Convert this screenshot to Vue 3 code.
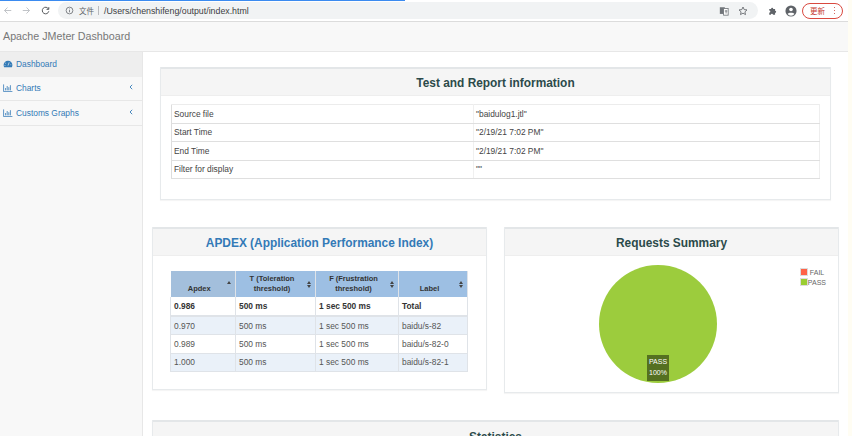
<script setup>
const info = [
  ['Source file', '"baidulog1.jtl"'],
  ['Start Time', '"2/19/21 7:02 PM"'],
  ['End Time', '"2/19/21 7:02 PM"'],
  ['Filter for display', '""'],
]
const apdex = [
  ['0.970', '500 ms', '1 sec 500 ms', 'baidu/s-82'],
  ['0.989', '500 ms', '1 sec 500 ms', 'baidu/s-82-0'],
  ['1.000', '500 ms', '1 sec 500 ms', 'baidu/s-82-1'],
]
</script>

<template>
  <div class="screen">
    <div class="window">
      <div class="progress"></div>
      <header class="toolbar">
        <svg class="nav dim" viewBox="0 0 12 12"><path d="M11 6H2M6 2L2 6l4 4" /></svg>
        <svg class="nav dim" viewBox="0 0 12 12"><path d="M1 6h9M6 2l4 4-4 4" /></svg>
        <svg class="nav" viewBox="0 0 12 12"><path d="M10 4A4.4 4.4 0 1 0 10.4 7M10.4 1.5V4.5H7.4" /></svg>
        <div class="omnibox">
          <svg class="info" viewBox="0 0 12 12"><circle cx="6" cy="6" r="4.5" /><path d="M6 5.4v3M6 3.4v1" /></svg>
          <span class="scheme">文件</span>
          <span class="sep"></span>
          <span class="url">/Users/chenshifeng/output/index.html</span>
          <span class="spacer"></span>
          <svg class="tr" viewBox="0 0 12 12"><rect x="1" y="1.5" width="6" height="8" fill="#70757a" /><rect x="5.5" y="3" width="5.5" height="8" fill="#fff" stroke="#70757a" /><path d="M7 6h3M8.5 5v4" stroke="#70757a" fill="none" /></svg>
          <svg class="star" viewBox="0 0 12 12"><path d="M6 1.2l1.4 3.1 3.4.4-2.5 2.3.7 3.3L6 8.6l-3 1.7.7-3.3L1.200 4.700l3.400-.4z" /></svg>
        </div>
        <svg class="ext" viewBox="0 0 12 12"><path d="M1.500 3.500h2.200a1.300 1.300 0 0 1 2.600 0h2.200v2.200a1.300 1.300 0 0 1 0 2.600v2.200H6a1.300 1.300 0 0 0-2.600 0H1.500V8a1.300 1.300 0 0 0 0-2.600z" /></svg>
        <svg class="avatar" viewBox="0 0 14 14"><circle cx="7" cy="7" r="6.500" fill="#5f6368" /><circle cx="7" cy="5.200" r="2.100" fill="#fff" /><path d="M3 10.400c1-1.800 7-1.800 8 0a5 5 0 0 1-8 0z" fill="#fff" /></svg>
        <div class="update"><span>更新</span><i></i></div>
      </header>

      <nav class="brandbar">Apache JMeter Dashboard</nav>

      <div class="body">
        <aside class="sidebar">
          <div class="item active">
            <svg class="gauge" viewBox="0 0 12 10"><path d="M6 .8A5.500 5.500 0 0 0 .5 6.300c0 1 .3 1.900.7 2.700h9.600c.4-.8.700-1.700.7-2.700A5.500 5.500 0 0 0 6 .8z" /><path d="M6 7L7.500 3M3 3.500v1M9.500 5.500v1M2.200 6.500v1" stroke="#f0f0f0" stroke-width=".9" /></svg>
            <span>Dashboard</span>
          </div>
          <div class="item">
            <svg class="bars" viewBox="0 0 12 10"><path d="M.5 .5v9h11M3 8V5M5 8V2.500M7 8V4M9 8V1.500" /></svg>
            <span>Charts</span>
            <svg class="chev" viewBox="0 0 4 6"><path d="M3.200 .8L1 3l2.200 2.200" /></svg>
          </div>
          <div class="item">
            <svg class="bars" viewBox="0 0 12 10"><path d="M.5 .5v9h11M3 8V5M5 8V2.500M7 8V4M9 8V1.500" /></svg>
            <span>Customs Graphs</span>
            <svg class="chev" viewBox="0 0 4 6"><path d="M3.200 .8L1 3l2.200 2.200" /></svg>
          </div>
        </aside>

        <main class="content">
          <section class="card info-card">
            <h2 class="card-head dark">Test and Report information</h2>
            <div class="info-body">
              <table class="info-table">
                <tbody>
                  <tr v-for="row in info" :key="row[0]">
                    <td class="c1">{{ row[0] }}</td>
                    <td>{{ row[1] }}</td>
                  </tr>
                </tbody>
              </table>
            </div>
          </section>

          <div class="pair">
            <section class="card apdex-card">
              <h2 class="card-head blue">APDEX (Application Performance Index)</h2>
              <div class="apdex-body">
                <table class="apdex-table">
                  <thead>
                    <tr>
                      <th class="sorted w1">Apdex<i class="sort up"></i></th>
                      <th class="w2">T (Toleration threshold)<i class="sort"></i></th>
                      <th class="w3">F (Frustration threshold)<i class="sort"></i></th>
                      <th class="w4">Label<i class="sort"></i></th>
                    </tr>
                  </thead>
                  <tbody>
                    <tr class="total">
                      <td>0.986</td><td>500 ms</td><td>1 sec 500 ms</td><td>Total</td>
                    </tr>
                    <tr v-for="row in apdex" :key="row[3]">
                      <td v-for="cell in row" :key="cell">{{ cell }}</td>
                    </tr>
                  </tbody>
                </table>
              </div>
            </section>

            <section class="card summary-card">
              <h2 class="card-head dark">Requests Summary</h2>
              <div class="pie-body">
                <div class="pie">
                  <div class="pie-label">PASS<br />100%</div>
                </div>
                <ul class="legend">
                  <li><i class="swatch red"></i><span class="l-fail">FAIL</span></li>
                  <li><i class="swatch green"></i><span>PASS</span></li>
                </ul>
              </div>
            </section>
          </div>

          <section class="card stats-card">
            <h2 class="card-head dark">Statistics</h2>
          </section>
        </main>
      </div>
    </div>
    <div class="strip"></div>
  </div>
</template>

<style scoped>
.screen {
  display: flex;
  width: 852px;
  height: 436px;
  overflow: hidden;
  font-family: "Liberation Sans", Arial, sans-serif;
  background: #fff;
  color: #333;
}
.window {
  position: relative;
  width: 848px;
  display: flex;
  flex-direction: column;
  flex: none;
}
.strip { flex: 1; background: #fffdf3; }
.progress {
  position: absolute;
  left: 0;
  top: 0;
  width: 405px;
  height: 1px;
  background: #3b8bf0;
}
.toolbar {
  height: 22px;
  box-sizing: border-box;
  flex: none;
  display: flex;
  align-items: center;
  background: #fff;
  border-bottom: 1px solid #dcdcdc;
  padding: 0 0 0 3px;
}
.nav { width: 9px; height: 9px; margin-right: 10px; flex: none; fill: none; stroke: #55585c; stroke-width: 1.3; }
.nav.dim { stroke: #bfc2c6; }
.nav:nth-child(3) { margin-right: 8px; margin-left: 0; }
.omnibox {
  width: 700px;
  height: 17px;
  flex: none;
  border-radius: 9px;
  background: #f1f3f4;
  display: flex;
  align-items: center;
  padding: 0 5px 0 7px;
  box-sizing: border-box;
}
.info { width: 9px; height: 9px; fill: none; stroke: #5f6368; stroke-width: 1; }
.scheme { font: 7.500px "Noto Sans CJK SC", sans-serif; color: #5f6368; margin-left: 5px; }
.sep { width: 1px; height: 9px; background: #b8babd; margin: 0 5px 0 4px; }
.url { font-size: 8.800px; color: #3c4043; }
.spacer { flex: 1; }
.tr { width: 10px; height: 10px; margin-right: 9px; }
.star { width: 10px; height: 10px; fill: none; stroke: #5f6368; stroke-width: 1; margin-right: 5px; }
.ext { width: 10px; height: 10px; fill: #5f6368; margin-left: 10px; }
.avatar { width: 12px; height: 12px; margin-left: 7px; }
.update {
  margin-left: 5px;
  width: 41px;
  height: 16px;
  border: 1px solid #d9493f;
  border-radius: 8px;
  box-sizing: border-box;
  display: flex;
  align-items: center;
  padding: 0 7px 0 7px;
  justify-content: space-between;
  color: #c5392f;
  font: 7.500px "Noto Sans CJK SC", sans-serif;
}
.update i {
  width: 1.500px;
  height: 1.500px;
  border-radius: 50%;
  background: #c5392f;
  box-shadow: 0 -3px 0 #c5392f, 0 3px 0 #c5392f;
}
.brandbar {
  height: 30px;
  flex: none;
  box-sizing: border-box;
  background: #f8f8f8;
  border-bottom: 1px solid #e7e7e7;
  font-size: 10.700px;
  line-height: 28px;
  padding-left: 3px;
  color: #777;
}
.body { flex: 1; display: flex; min-height: 0; }
.sidebar {
  width: 143px;
  flex: none;
  box-sizing: border-box;
  background: #f8f8f8;
  border-right: 1px solid #e7e7e7;
}
.item {
  height: 24.500px;
  box-sizing: border-box;
  display: flex;
  align-items: center;
  padding: 0 8px 0 3px;
  border-bottom: 1px solid #e7e7e7;
  font-size: 8.400px;
  color: #337ab7;
}
.item.active { background: #eee; border-bottom: none; }
.item span { margin-left: 3px; flex: 1; }
.gauge { width: 10px; height: 8px; fill: #337ab7; }
.bars { width: 10px; height: 8px; fill: none; stroke: #337ab7; stroke-width: 1; }
.chev { width: 4px; height: 6px; fill: none; stroke: #337ab7; stroke-width: .9; margin-bottom: 2px; margin-right: 1px; }
.content {
  flex: 1;
  min-width: 0;
  box-sizing: border-box;
  padding: 15px 9px 0;
  overflow: hidden;
}
.card {
  box-sizing: border-box;
  background: #fff;
  border: 1px solid #e7eaec;
  border-top: 0;
  box-shadow: 0 1px 1px rgba(0, 0, 0, .04);
}
.card-head {
  margin: 0;
  box-sizing: border-box;
  height: 29px;
  text-align: center;
  background: #f5f5f5;
  border-top: 2px solid #e3e6e8;
  border-bottom: 1px solid #eee;
  font-size: 11.900px;
  line-height: 29px;
  font-weight: 700;
}
.dark { color: #2b4a4a; }
.blue { color: #337ab7; }
.info-card { margin: 0 8px; height: 133px; }
.info-body { padding: 8px 10px; }
.info-table { width: 100%; border-collapse: collapse; table-layout: fixed; font-size: 8.400px; color: #444; }
.info-table td {
  height: 18.500px;
  box-sizing: border-box;
  padding: 0 2px;
  border: 1px solid #ececec;
  border-bottom: 1px solid #dfdfdf;
  border-left: 0;
  border-right: 0;
}
.info-table td.c1 { width: 302px; border-right: 1px solid #f0f0f0; border-left: 1px solid #ddd; }
.info-table td:last-child { border-right: 1px solid #eee; }
.pair { display: flex; justify-content: space-between; margin-top: 27px; align-items: flex-start; }
.apdex-card { width: 335px; height: 163px; }
.summary-card { width: 335px; height: 166px; }
.apdex-body { padding: 15px 17px; }
.apdex-table { width: 297px; border-collapse: collapse; table-layout: fixed; font-size: 8.400px; color: #555; }
.apdex-table th {
  position: relative;
  height: 26px;
  padding: 0 10px 0 3px;
  background: #9dbfe3;
  color: #333;
  font-size: 7.500px;
  line-height: 10px;
  vertical-align: bottom;
  padding-bottom: 3px;
  border-right: 1px solid #dfe3e8;
  box-sizing: border-box;
  font-weight: 700;
}
.apdex-table th.sorted { background: #a3bfdc; }
.w1 { width: 65px; }
.w2 { width: 80px; }
.w3 { width: 83px; }
.w4 { width: 69px; }
.sort {
  position: absolute;
  right: 4px;
  top: 10px;
  width: 0;
  height: 0;
  border-left: 2.500px solid transparent;
  border-right: 2.500px solid transparent;
  border-bottom: 3px solid #444;
}
.sort::after {
  content: "";
  position: absolute;
  left: -2.500px;
  top: 4px;
  width: 0;
  height: 0;
  border-left: 2.500px solid transparent;
  border-right: 2.500px solid transparent;
  border-top: 3px solid #444;
}
.sort.up::after { display: none; }
.apdex-table td {
  height: 18.500px;
  padding: 0 3px;
  border-right: 1px solid #dfe3e8;
  border-bottom: 1px solid #dfe3e8;
  box-sizing: border-box;
  white-space: nowrap;
}
.apdex-table tbody tr:nth-child(even) td { background: #eaf1f9; }
.apdex-table tr.total td {
  height: 19px;
  font-weight: 700;
  color: #333;
  border-bottom: 2px solid #dfe3e8;
}
.apdex-table td:first-child { border-left: 1px solid #dfe3e8; }
.pie-body { position: relative; height: 136px; }
.pie {
  position: absolute;
  left: 94px;
  top: 9px;
  width: 118px;
  height: 118px;
  border-radius: 50%;
  background: #9ccc3d;
}
.pie-label {
  position: absolute;
  left: 48px;
  bottom: 2px;
  width: 22px;
  height: 26px;
  background: rgba(0, 0, 0, .45);
  color: #fff;
  font-size: 7px;
  line-height: 10.500px;
  text-align: center;
  padding-top: 2px;
  box-sizing: border-box;
}
.legend {
  position: absolute;
  right: 12px;
  top: 11px;
  margin: 0;
  padding: 0;
  list-style: none;
  font-size: 7px;
  color: #666;
}
.legend li { display: flex; align-items: center; height: 10px; }
.legend span { margin-left: 0; }
.legend .l-fail { margin-left: 2px; }
.swatch { width: 6px; height: 6px; border: 1px solid #ddd; flex: none; }
.red { background: #ff6347; }
.green { background: #9acd32; }
.stats-card { margin-top: 27px; height: 60px; }
.stats-card .card-head { line-height: 31px; height: 34px; }
</style>
